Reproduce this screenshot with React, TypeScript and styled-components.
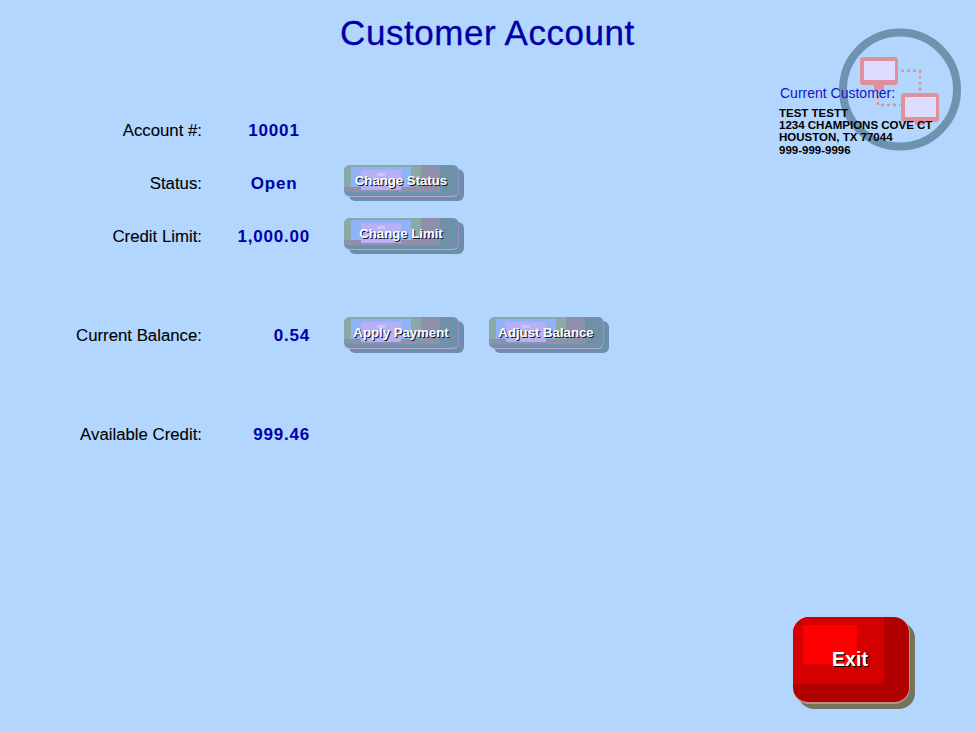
import React from "react";
import styled, { createGlobalStyle } from "styled-components";

const Global = createGlobalStyle`
  html, body { margin: 0; padding: 0; background: #b3d6ff; }
  body { font-family: "Liberation Sans", Arial, sans-serif; }
`;

const Page = styled.div`
  position: relative;
  width: 975px;
  height: 731px;
  overflow: hidden;
  background: #b3d6ff;
  display: flex;
  flex-direction: column;
`;

const Title = styled.h1`
  margin: 0;
  padding-top: 13px;
  height: 40px;
  font-size: 35px;
  line-height: 40px;
  font-weight: 400;
  letter-spacing: 0.55px;
  text-align: center;
  color: #0000a8;
  -webkit-text-stroke: 0.3px #0000a8;
`;

const Body = styled.div`
  flex: 1;
  display: flex;
  align-items: flex-start;
  justify-content: space-between;
`;

const Form = styled.div`
  display: grid;
  grid-template-columns: 202px 108px auto;
  grid-template-rows: 53px 53px 53px 46px 53px 46px 53px;
  padding-top: 51px;
`;

const Label = styled.div`
  align-self: center;
  font-size: 16.8px;
  line-height: 20px;
  text-align: right;
  color: #000;
  -webkit-text-stroke: 0.1px #000;
`;

const Value = styled.div<{ $center?: boolean }>`
  align-self: center;
  font-size: 17px;
  line-height: 20px;
  font-weight: 700;
  letter-spacing: 0.8px;
  color: #0000a8;
  text-align: ${(p) => (p.$center ? "center" : "right")};
  padding-left: ${(p) => (p.$center ? "36px" : "0")};
  box-sizing: border-box;
`;

const Actions = styled.div`
  align-self: center;
  display: flex;
  gap: 30px;
  padding-left: 34px;
  height: 37px;
`;

const Gap = styled.div`
  grid-column: 1 / -1;
`;

const Action = styled.button`
  width: 115px;
  height: 32px;
  padding: 0;
  box-sizing: border-box;
  border: none;
  border-right: 1px solid #9b8fd0;
  border-bottom: 1px solid #b4a8d8;
  border-radius: 6px;
  font: 700 13.2px/30px "Liberation Sans", Arial, sans-serif;
  color: #fff;
  text-shadow: 1px 1px 0 #101028;
  box-shadow: 5px 4px 0 #6d8ea8;
  background-color: #6e90a8;
  background-repeat: no-repeat;
  background-image:
    linear-gradient(#c4c8ff, #c4c8ff),
    linear-gradient(#b6b0f4, #b6b0f4),
    linear-gradient(#8fb2f8, #8fb2f8),
    linear-gradient(#8f90ac, #8f90ac),
    linear-gradient(#8aaaa8, #8aaaa8),
    linear-gradient(#8f90ac, #8f90ac);
  background-size:
    8px 3px,
    40px 20px,
    60px 20px,
    77px 5px,
    77px 22px,
    19px 27px;
  background-position:
    33px 8px,
    17px 5px,
    7px 2px,
    0 22px,
    0 0,
    77px 0;
`;

const Customer = styled.div`
  position: relative;
  width: 195px;
  height: 130px;
  padding-top: 32px;
  box-sizing: border-box;
`;

const Logo = styled.svg`
  position: absolute;
  left: 59px;
  top: -25px;
  width: 124px;
  height: 124px;
`;

const CustomerLabel = styled.div`
  position: relative;
  font-size: 14px;
  line-height: 16px;
  color: #1414c4;
`;

const CustomerInfo = styled.div`
  position: relative;
  margin-top: 6px;
  margin-left: -1px;
  font-size: 11.5px;
  line-height: 12.2px;
  font-weight: 700;
  color: #000;
  white-space: nowrap;
`;

const Footer = styled.div`
  position: absolute;
  right: 65px;
  bottom: 27px;
`;

const ExitButton = styled.button`
  display: block;
  width: 117px;
  height: 87px;
  padding: 0 2px 1px 0;
  box-sizing: border-box;
  border: none;
  border-right: 1px solid #c09090;
  border-bottom: 2px solid #c09090;
  border-radius: 16px;
  font: 700 19.5px/24px "Liberation Sans", Arial, sans-serif;
  color: #fff;
  text-shadow: 1px 1px 0 #000;
  box-shadow: 5px 5px 0 #74745c;
  background-color: #b00000;
  background-repeat: no-repeat;
  background-image:
    linear-gradient(#ff0000, #ff0000),
    linear-gradient(#d40000, #d40000);
  background-size: 54px 39px, 91px 67px;
  background-position: 10px 8px, 0 0;
`;

export default function App() {
  return (
    <Page>
      <Global />
      <Title>Customer Account</Title>
      <Body>
        <Form>
          <Label>Account #:</Label>
          <Value $center>10001</Value>
          <span />
          <Label>Status:</Label>
          <Value $center>Open</Value>
          <Actions>
            <Action>Change Status</Action>
          </Actions>
          <Label>Credit Limit:</Label>
          <Value>1,000.00</Value>
          <Actions>
            <Action>Change Limit</Action>
          </Actions>
          <Gap />
          <Label>Current Balance:</Label>
          <Value>0.54</Value>
          <Actions>
            <Action>Apply Payment</Action>
            <Action>Adjust Balance</Action>
          </Actions>
          <Gap />
          <Label>Available Credit:</Label>
          <Value>999.46</Value>
        </Form>
        <Customer>
          <Logo viewBox="0 0 124 124">
            <circle cx="61" cy="61.5" r="57" fill="none" stroke="#6e93ae" strokeWidth="8" />
            <path d="M62 42.7H81V65" fill="none" stroke="#e0909c" strokeWidth="2.4" strokeDasharray="3 3" />
            <path d="M39 62V77H61" fill="none" stroke="#e0909c" strokeWidth="2.4" strokeDasharray="3 3" />
            <rect x="21" y="29" width="38" height="28" rx="3" fill="#e0909c" />
            <rect x="25" y="33" width="31" height="19" fill="#dcdcff" />
            <rect x="35" y="57" width="10" height="5" fill="#e0909c" />
            <rect x="62" y="65" width="38" height="29" rx="3" fill="#e0909c" />
            <rect x="66" y="69" width="31" height="20" fill="#dcdcff" />
            <rect x="76" y="94" width="10" height="3" fill="#e0909c" />
          </Logo>
          <CustomerLabel>Current Customer:</CustomerLabel>
          <CustomerInfo>
            TEST TESTT
            <br />
            1234 CHAMPIONS COVE CT
            <br />
            HOUSTON, TX 77044
            <br />
            999-999-9996
          </CustomerInfo>
        </Customer>
      </Body>
      <Footer>
        <ExitButton>Exit</ExitButton>
      </Footer>
    </Page>
  );
}
